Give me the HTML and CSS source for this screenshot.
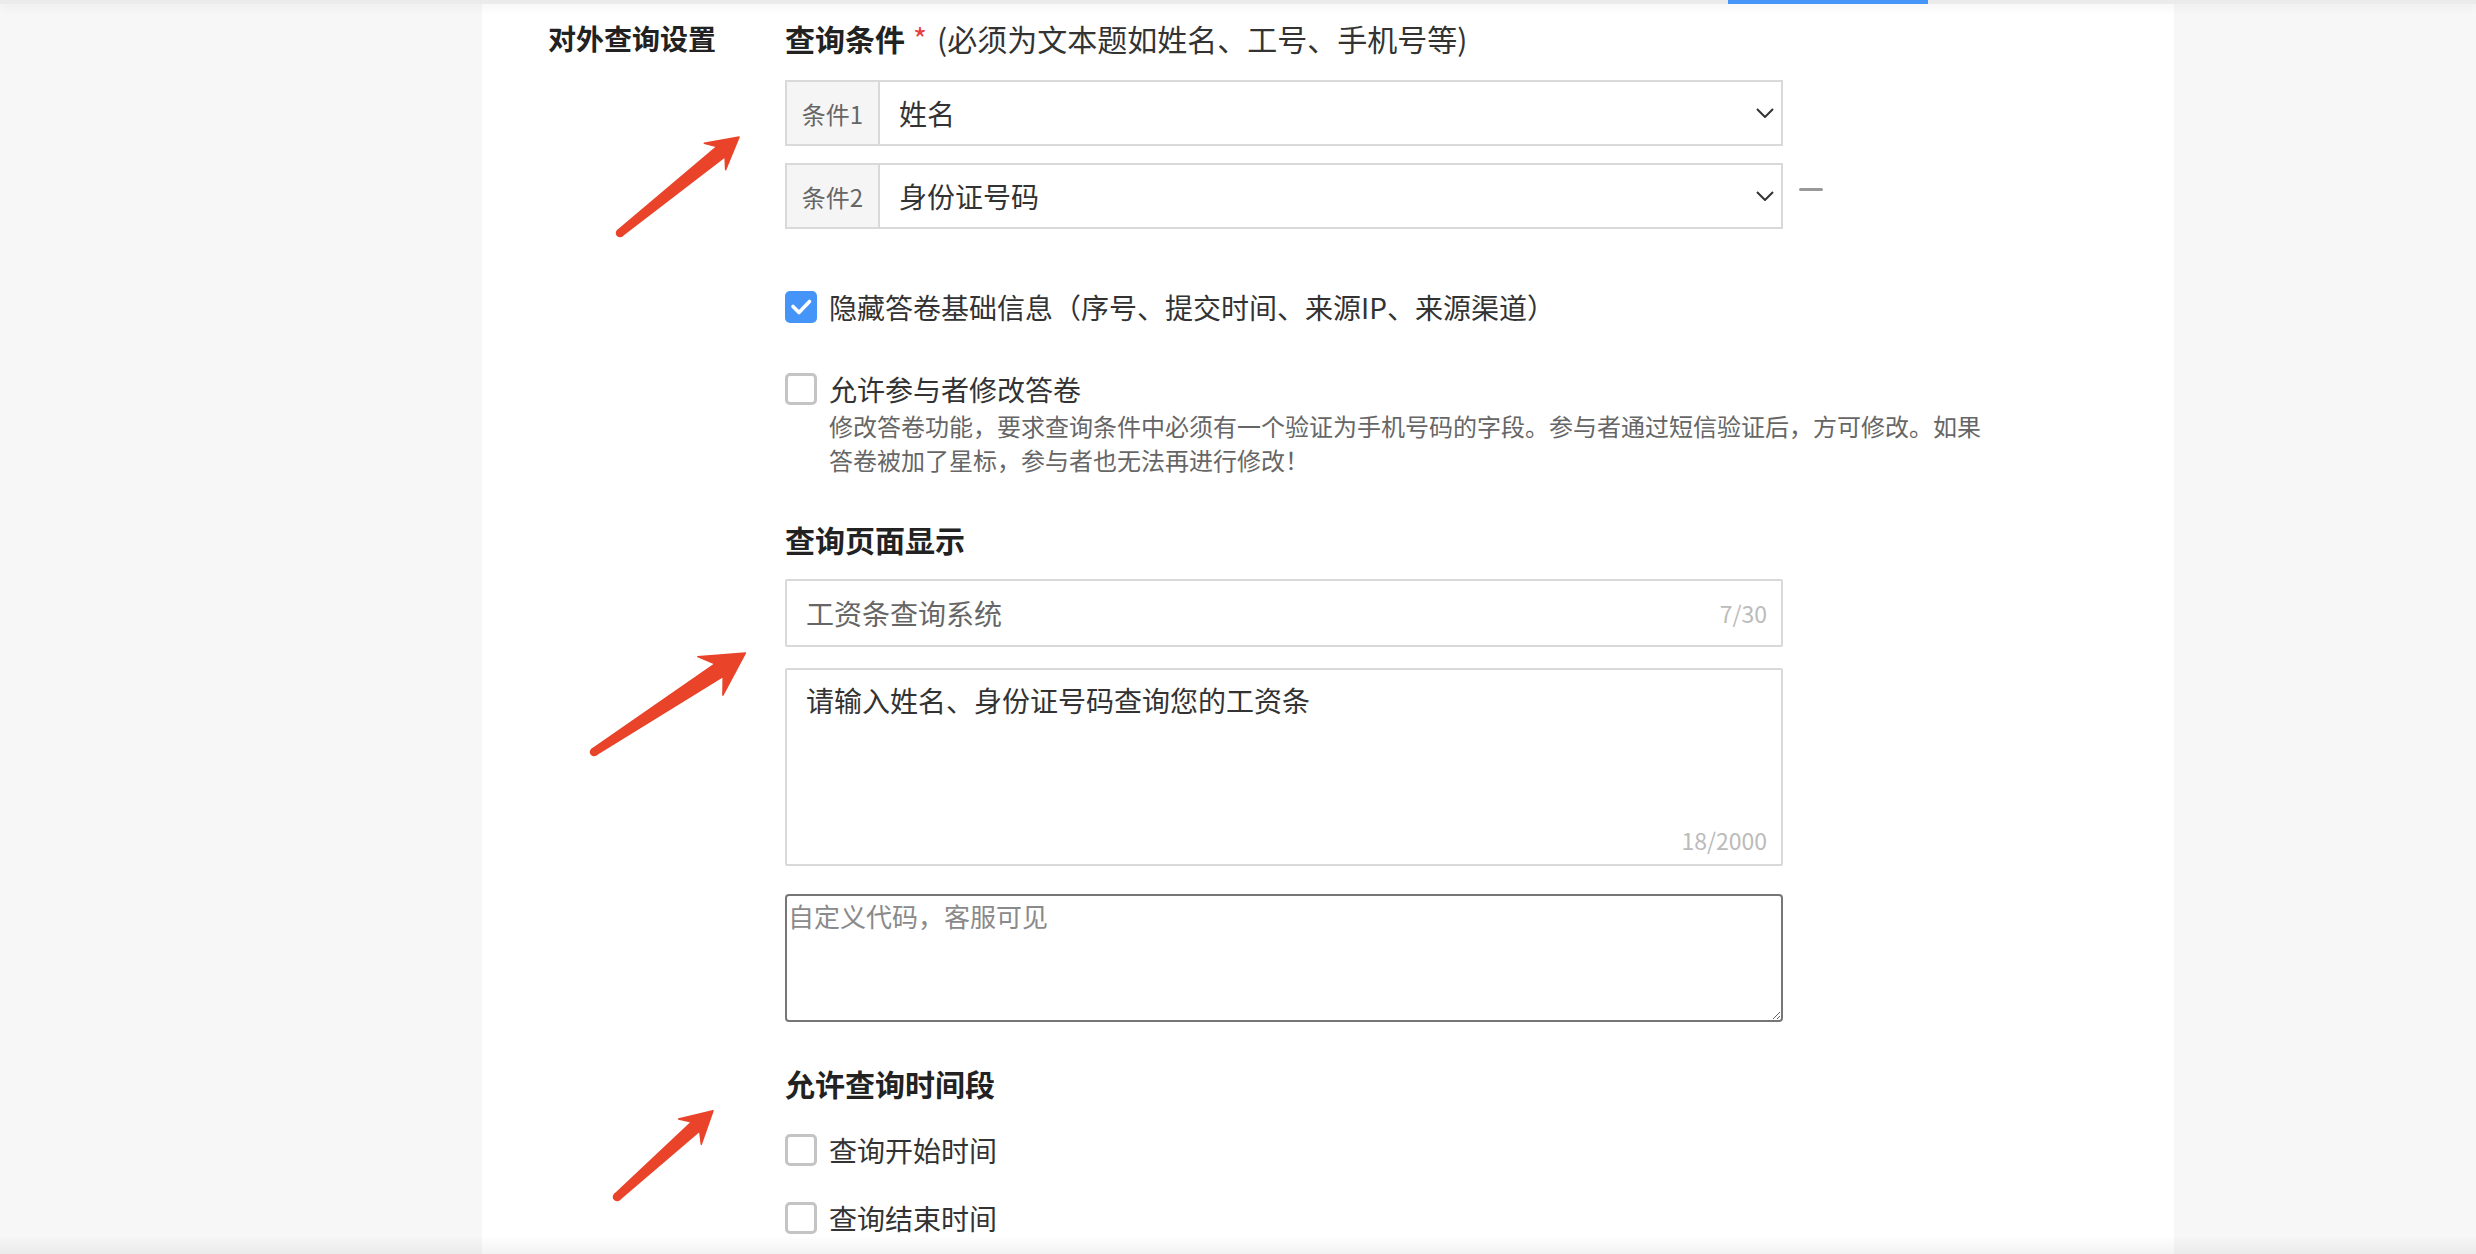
FILE: index.html
```html
<!DOCTYPE html>
<html lang="zh-CN">
<head>
    <meta charset="UTF-8">
    <meta name="viewport" content="width=device-width, initial-scale=1.0">
    <title>对外查询设置</title>
    <link rel="stylesheet" href="styles.css">
</head>
<body>

<header class="topbar"><span class="tab-line"></span></header>

<section class="panel">
    <div class="setting-row">
        <div class="setting-label">对外查询设置</div>
        <div class="setting-body">
            <h3 class="group-title">查询条件<span class="req">*</span><span class="hint">(必须为文本题如姓名、工号、手机号等)</span></h3>

            <div class="cond-row first">
                <div class="cond-select">
                    <span class="cond-addon">条件1</span>
                    <span class="cond-value">姓名</span>
                    <svg class="chevron" width="18" height="10" viewBox="0 0 18 10"><path d="M1 1 L9 9 L17 1" fill="none" stroke="#333" stroke-width="2"/></svg>
                </div>
            </div>
            <div class="cond-row">
                <div class="cond-select">
                    <span class="cond-addon">条件2</span>
                    <span class="cond-value">身份证号码</span>
                    <svg class="chevron" width="18" height="10" viewBox="0 0 18 10"><path d="M1 1 L9 9 L17 1" fill="none" stroke="#333" stroke-width="2"/></svg>
                </div>
                <span class="cond-remove"></span>
            </div>

            <label class="check-row hide-info">
                <span class="checkbox checked"><svg width="32" height="32" viewBox="0 0 32 32"><path d="M8 15.5 L14 21.5 L24.5 10.5" fill="none" stroke="#fff" stroke-width="3.6" stroke-linecap="round" stroke-linejoin="round"/></svg></span>
                隐藏答卷基础信息（序号、提交时间、来源IP、来源渠道）
            </label>

            <label class="check-row allow-edit">
                <span class="checkbox"></span>
                允许参与者修改答卷
            </label>
            <p class="check-desc">修改答卷功能，要求查询条件中必须有一个验证为手机号码的字段。参与者通过短信验证后，方可修改。如果<br>答卷被加了星标，参与者也无法再进行修改！</p>

            <h3 class="group-title page-title">查询页面显示</h3>
            <div class="text-field">
                <span class="field-value">工资条查询系统</span>
                <span class="counter">7/30</span>
            </div>
            <div class="text-box">
                <span class="box-value">请输入姓名、身份证号码查询您的工资条</span>
                <span class="counter">18/2000</span>
            </div>
            <textarea class="code-area" placeholder="自定义代码，客服可见"></textarea>

            <h3 class="group-title time-title">允许查询时间段</h3>
            <label class="check-row time-start">
                <span class="checkbox"></span>
                查询开始时间
            </label>
            <label class="check-row time-end">
                <span class="checkbox"></span>
                查询结束时间
            </label>
        </div>
    </div>
</section>

<!-- annotation arrows drawn over the page -->
<svg class="arrows" width="2476" height="1254" viewBox="0 0 2476 1254">
    <g fill="#e9432a" stroke="#e9432a" stroke-width="1.5" stroke-linejoin="round">
        <g transform="translate(620 233) rotate(-38.9)">
            <polygon points="0,-3.5 129.75,-6.5 122,-17 153,0 122,17 129.75,6.5 0,3.5"/>
            <circle cx="0" cy="0" r="3.5"/>
        </g>
        <g transform="translate(594 752) rotate(-33.2)">
            <polygon points="0,-3.5 149.5,-7.5 139,-23 181,0 139,23 149.5,7.5 0,3.5"/>
            <circle cx="0" cy="0" r="3.5"/>
        </g>
        <g transform="translate(617 1197) rotate(-41.9)">
            <polygon points="0,-3.5 105.75,-6 98,-17 129,0 98,17 105.75,6 0,3.5"/>
            <circle cx="0" cy="0" r="3.5"/>
        </g>
    </g>
</svg>

<div class="bottom-fade"></div>

</body>
</html>
```

FILE: styles.css
```css
body {
    margin: 0;
    background-color: #f7f7f7;
    font-family: "Noto Sans CJK SC", "Noto Sans", sans-serif;
    color: #333;
    overflow: hidden;
}
.topbar {
    position: relative;
    z-index: 2;
    height: 4px;
    background-color: #ebebeb;
    box-shadow: 0 3px 8px rgba(0, 0, 0, 0.07);
}
.tab-line {
    display: block;
    margin-left: 1728px;
    width: 200px;
    height: 4px;
    background-color: #4596f8;
}
.panel {
    margin-left: 482px;
    width: 1692px;
    min-height: 1250px;
    box-sizing: border-box;
    padding: 13px 0 0 66px;
    background-color: #fff;
}
.setting-row {
    display: flex;
}
.setting-label {
    width: 237px;
    flex-shrink: 0;
    font-size: 28px;
    font-weight: bold;
    line-height: 42px;
    color: #222;
}
.setting-body {
    width: 1300px;
}
.group-title {
    margin: 0;
    font-size: 30px;
    font-weight: bold;
    line-height: 42px;
    color: #222;
}
.req {
    color: #e8403c;
    font-weight: normal;
    margin: 0 10px 0 8px;
}
.hint {
    font-weight: normal;
    color: #333;
}
.cond-row {
    display: flex;
    align-items: center;
    margin-top: 17px;
}
.cond-row.first {
    margin-top: 21px;
}
.cond-select {
    display: flex;
    align-items: center;
    width: 998px;
    height: 66px;
    box-sizing: border-box;
    border: 2px solid #d9d9d9;
}
.cond-addon {
    width: 93px;
    height: 100%;
    display: flex;
    align-items: center;
    justify-content: center;
    box-sizing: border-box;
    border-right: 2px solid #d9d9d9;
    background-color: #f5f5f5;
    font-size: 24px;
    color: #666;
}
.cond-value {
    flex: 1;
    padding-left: 19px;
    font-size: 28px;
    color: #333;
}
.chevron {
    margin-right: 7px;
}
.cond-remove {
    width: 24px;
    height: 3px;
    margin-left: 16px;
    margin-top: -14px;
    background-color: #999;
    border-radius: 2px;
}
.check-row {
    display: flex;
    align-items: center;
    height: 32px;
    font-size: 28px;
    color: #333;
}
.checkbox {
    width: 32px;
    height: 32px;
    box-sizing: border-box;
    margin-right: 12px;
    border: 3px solid #c4c4c4;
    border-radius: 5px;
    flex-shrink: 0;
}
.checkbox.checked {
    border: none;
    background-color: #4594f7;
}
.checkbox svg {
    display: block;
}
.hide-info {
    margin-top: 62px;
}
.allow-edit {
    margin-top: 50px;
}
.check-desc {
    margin: 4px 0 0 44px;
    max-width: 1200px;
    font-size: 24px;
    line-height: 34px;
    color: #666;
}
.page-title {
    margin-top: 41px;
}
.text-field {
    display: flex;
    align-items: center;
    justify-content: space-between;
    width: 998px;
    height: 68px;
    box-sizing: border-box;
    margin-top: 19px;
    padding: 0 14px 0 19px;
    border: 2px solid #d9d9d9;
    border-radius: 2px;
}
.field-value {
    font-size: 28px;
    color: #666;
}
.counter {
    font-size: 23px;
    color: #bbb;
}
.text-box {
    display: flex;
    flex-direction: column;
    justify-content: space-between;
    width: 998px;
    height: 198px;
    box-sizing: border-box;
    margin-top: 21px;
    padding: 10px 14px 9px 19px;
    border: 2px solid #d9d9d9;
    border-radius: 2px;
}
.box-value {
    font-size: 28px;
    line-height: 40px;
    color: #333;
}
.text-box .counter {
    align-self: flex-end;
    line-height: 30px;
}
.code-area {
    display: block;
    width: 998px;
    height: 128px;
    box-sizing: border-box;
    margin-top: 28px;
    padding: 1px;
    border: 2px solid #767676;
    border-radius: 4px;
    font-family: "Noto Sans CJK SC", "Noto Sans", sans-serif;
    font-size: 26px;
    line-height: 38px;
    background-color: #fff;
}
.code-area::placeholder {
    color: #8a8a8a;
}
.time-title {
    margin-top: 40px;
}
.time-start {
    margin-top: 30px;
}
.time-end {
    margin-top: 36px;
}
.arrows {
    position: absolute;
    top: 0;
    left: 0;
    pointer-events: none;
}
.bottom-fade {
    position: fixed;
    left: 0;
    right: 0;
    bottom: 0;
    height: 18px;
    background: linear-gradient(rgba(0, 0, 0, 0), rgba(0, 0, 0, 0.05));
    pointer-events: none;
}
```
